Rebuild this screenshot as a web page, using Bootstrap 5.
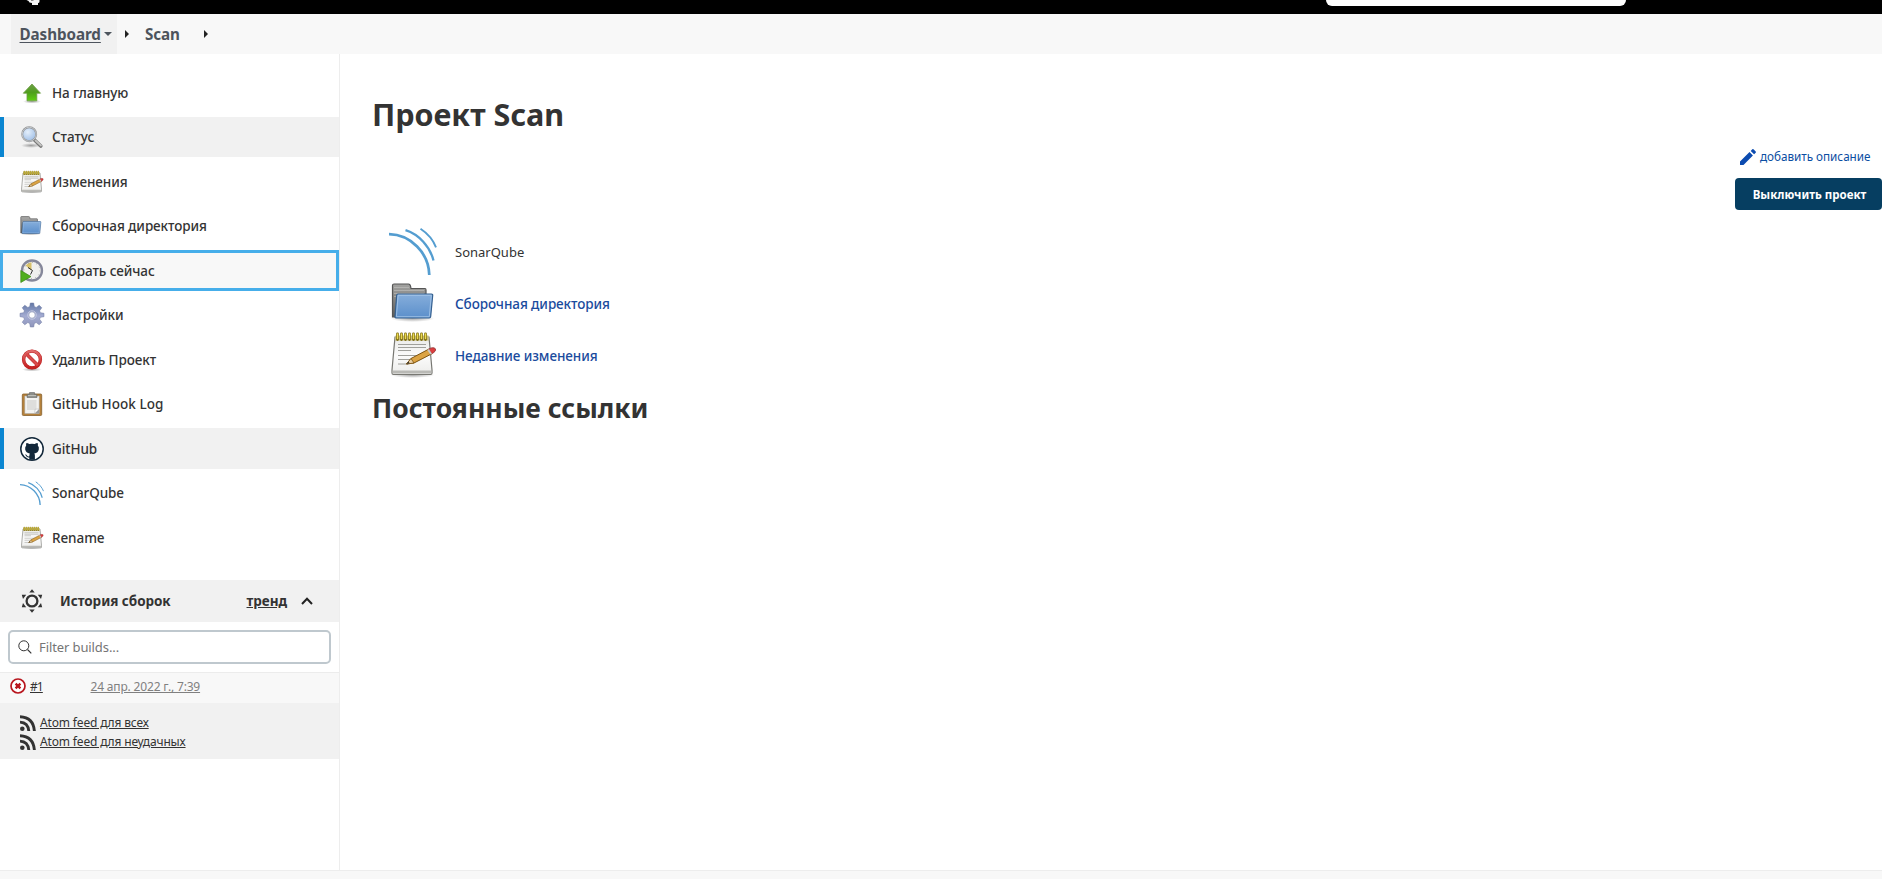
<!DOCTYPE html>
<html lang="ru">
<head>
<meta charset="utf-8">
<meta name="viewport" content="width=device-width, initial-scale=1">
<title>Scan [Jenkins]</title>
<link rel="stylesheet" href="https://cdn.jsdelivr.net/npm/bootstrap@5.3.0/dist/css/bootstrap.min.css">
<style>
  body { font-family: "Noto Sans", "Open Sans", sans-serif; color: #333; font-size: 13.5px; height: 100vh; overflow: hidden; background: #fff; }
  svg { display: block; flex: none; overflow: visible; }
  a { color: inherit; }
  .topbar { height: 14px; background: #000; padding-right: 256px; padding-left: 26px; }
  .top-search { width: 300px; height: 6px; background: #fff; border-radius: 0 0 6px 6px; }
  .crumbs { height: 40px; background: #f8f8f8; font-size: 15.2px; font-weight: 700; letter-spacing: -.07px; color: #4d545d; }
  .crumb-home { margin-left: 11px; width: 106px; padding-left: 8.5px; background: #f1f1f1; }
  .crumb-home a { text-underline-offset: 2px; }
  .caret-down { border: 4.5px solid transparent; border-top-color: #4d545d; border-bottom: 0; margin-left: 3px; }
  .caret-right { border: 4.5px solid transparent; border-left-color: #222; border-right: 0; }
  .crumb-sep { margin-left: 8px; }
  .crumb-project { margin: 0 24.5px 0 16px; }
  .side { width: 340px; border-right: 1px solid #ededed; padding-top: 18.2px; }
  .tasks { gap: 4px; }
  .tasks .nav-link { height: 40.5px; padding: .8px 0 0 20px; gap: 8px; color: #333; font-weight: 500; letter-spacing: -.08px; }
  .tasks .nav-link.active { background: #f1f1f1; box-shadow: inset 4px 0 #0b86d1; }
  .tasks .nav-link.focused { background: #f8f8f8; border: 3px solid #46aeea; border-radius: 0; padding-left: 17px; }
  .tasks .nav-link.wide { letter-spacing: .06px; }
  .history-head { height: 42px; margin-top: 22.3px; background: #f1f1f1; font-weight: 700; padding: 0 26px 0 20px; letter-spacing: -.05px; }
  .history-title { margin-left: 16px; }
  .chevron { margin-left: 14px; }
  .filter-box { padding: 8px 8px 8px; }
  .filter-box .form-control { height: 34px; border: 2px solid #bfc8ce; border-radius: 5px; padding: 0 8px 0 29px; font-size: 13px; letter-spacing: -.1px; color: #333; }
  .filter-box .form-control::placeholder { color: #757575; }
  .filter-box svg { position: absolute; left: 10px; top: 10px; }
  .build-row { height: 31px; border-top: 1px solid #ececec; background: #f8f8f8; font-size: 12px; padding: 0 0 1px 10px; letter-spacing: -.17px; }
  .build-row svg { margin: 0 4px 3px 0; }
  .build-num { width: 60.5px; letter-spacing: -.9px; }
  .build-date { color: #808080; }
  .feeds { height: 56px; background: #f1f1f1; padding: 10.6px 0 0 20px; font-size: 12px; letter-spacing: -.16px; }
  .feeds a { height: 19px; gap: 4px; }
  .content-area { padding-top: 40px; }
  h1 { font-size: 30.5px; line-height: 40px; font-weight: 700; margin: 0 0 0 32px; }
  h2 { font-size: 26.5px; line-height: 36px; font-weight: 700; margin: 8px 0 0 32px; }
  .actions { gap: 9px; margin-top: 11px; }
  .describe { height: 24px; color: #0b4ea2; font-size: 11.7px; gap: 4px; padding-right: 11.500px; }
  .btn-dark-blue { width: 147px; height: 32px; background: #063e61; color: #fff; font-size: 11.5px; font-weight: 700; border: 0; border-radius: 4px; padding: 1px 0 0 2px; }
  .links { margin: 16px 0 0 49px; }
  .links > div { height: 52px; gap: 18px; }
  .links svg { margin-bottom: 3px; }
  .links a { color: #1a4b9d; font-weight: 500; letter-spacing: -.08px; }
  .links span { font-size: 13px; padding-top: 1px; }
  .foot { height: 9px; background: #f8f8f8; border-top: 1px solid #ededed; }
</style>
</head>
<body class="d-flex flex-column">

<svg width="0" height="0" class="position-absolute" aria-hidden="true">
  <defs>
    <linearGradient id="gGreen" x1="0" y1="0" x2="0" y2="1"><stop offset="0" stop-color="#6f9f4a"/><stop offset=".5" stop-color="#4f9f1c"/><stop offset="1" stop-color="#5fd010"/></linearGradient>
    <linearGradient id="gBlue" x1="0" y1="0" x2="0" y2="1"><stop offset="0" stop-color="#86aedb"/><stop offset="1" stop-color="#5b8fcb"/></linearGradient>
    <linearGradient id="gGrey" x1="0" y1="0" x2="0" y2="1"><stop offset="0" stop-color="#a3a3a1"/><stop offset="1" stop-color="#5e5e5c"/></linearGradient>
    <linearGradient id="gPaper" x1="0" y1="0" x2="0" y2="1"><stop offset="0" stop-color="#e9e9e7"/><stop offset=".5" stop-color="#fbfbfb"/><stop offset="1" stop-color="#ececea"/></linearGradient>
    <linearGradient id="gGear" x1="0" y1="0" x2="0" y2="1"><stop offset="0" stop-color="#6378a6"/><stop offset=".55" stop-color="#a4acd2"/><stop offset="1" stop-color="#8f96bb"/></linearGradient>
    <linearGradient id="gRed" x1="0" y1="0" x2="0" y2="1"><stop offset="0" stop-color="#e06a6a"/><stop offset="1" stop-color="#c51f1f"/></linearGradient>
    <radialGradient id="gLens" cx=".4" cy=".35" r=".7"><stop offset="0" stop-color="#e4effb"/><stop offset="1" stop-color="#9dbde6"/></radialGradient>
    <radialGradient id="gShade"><stop offset="0" stop-color="#000" stop-opacity=".35"/><stop offset="1" stop-color="#000" stop-opacity="0"/></radialGradient>

    <symbol id="i-notepad" viewBox="0 0 48 48">
      <ellipse cx="23.500" cy="44" rx="22" ry="3" fill="url(#gShade)"/>
      <path d="M6 6h34l3 33v3q0 1.500-1.500 1.500h-37Q3 43.500 3 42v-3z" fill="url(#gPaper)" stroke="#777772" stroke-width="1.200"/>
      <path d="M3.700 39.500h38.600l.2 3h-39z" fill="#b9b9b5"/>
      <path d="M6.500 4.500h33l.5 5H6z" fill="#c9bd7c"/>
      <path d="M8.500 3v5.500M12.500 3v5.500M16.500 3v5.500M20.500 3v5.500M24.500 3v5.500M28.500 3v5.500M32.500 3v5.500M36.500 3v5.500" stroke="#7a6a10" stroke-width="2.800" stroke-linecap="round"/>
      <path d="M8.500 3v4.500M12.500 3v4.500M16.500 3v4.500M20.500 3v4.500M24.500 3v4.500M28.500 3v4.500M32.500 3v4.500M36.500 3v4.500" stroke="#ecd94e" stroke-width="1.500" stroke-linecap="round"/>
      <path d="M9 13.500h28M9 16.500h28M9 19.500h13M9 24.500h21M9 28.500h14M9 33h10" stroke="#a0a09c" stroke-width="1"/>
      <path d="M17.500 33l4.500-5.500 18-9.500 3 4.700-18 9.300z" fill="#dba343" stroke="#7d5410" stroke-width="1"/>
      <path d="M17.500 33l4.500-5.500 3 4.500z" fill="#e9cfa3" stroke="#7d5410" stroke-width=".8"/>
      <path d="M17.500 33l2-2.500 1.200 1.700z" fill="#333"/>
      <path d="M39.500 18.200q4.600-2.800 6.800-.5 1.300 2.700-3.800 5.100z" fill="#dc3f3f" stroke="#8b2a2a" stroke-width=".8"/>
      <path d="M38.300 18.900l1.700-.9 3 4.700-1.700.9z" fill="#c9c9c9"/>
    </symbol>

    <symbol id="i-folder" viewBox="0 0 48 48">
      <ellipse cx="23.500" cy="39.500" rx="22" ry="3.500" fill="url(#gShade)"/>
      <path d="M3.500 38V6.500Q3.500 5 5 5h14.500Q21 5 21.500 7l.5 2.500h14q1 0 1 1.500v27z" fill="url(#gGrey)" stroke="#555" stroke-width="1.200"/>
      <path d="M5 8.500h15M5 11.500h30M5 14.500h30M5 17.500h30" stroke="#c9c9c7" stroke-opacity=".5" stroke-width="1"/>
      <path d="M9 15h33.500q1.300 0 1.200 1.300l-2 21.200q-.2 1.500-1.500 1.500H7Q5.800 39 6 37.200L7.700 16.300Q7.800 15 9 15z" fill="url(#gBlue)" stroke="#35608f" stroke-width="1.200"/>
      <path d="M9.100 16.300h33.200l-2 21.400H7.400z" fill="none" stroke="#a9c8ea" stroke-opacity=".8"/>
    </symbol>

    <symbol id="i-sonar" viewBox="0 0 48 48">
      <g fill="none" stroke="#549dd0"><path d="M0 7.200C21.500 7.500 40 26 40.300 48.500" stroke-width="2.700"/><path d="M16.500 3.200C30 7.500 41 19.500 44.500 33.500" stroke-width="2.300"/><path d="M31.500 1.700C38 6 44 12.500 47 20.300" stroke-width="1.900"/></g>
    </symbol>

    <symbol id="i-feed" viewBox="0 0 16 16">
      <circle cx="2.300" cy="13.700" r="2.300" fill="#333"/>
      <path d="M0 7.100q8.100.5 8.800 8.900M0 1.700q13.400.7 14.400 14.300" fill="none" stroke="#333" stroke-width="2.900"/>
    </symbol>
  </defs>
</svg>

<header class="topbar d-flex justify-content-between align-items-start">
  <svg width="14" height="6" viewBox="0 0 14 6"><path d="M.5 0h13v1.500q0 1.500-1.500 1.500v2H6V3L3.500 2.600 2.500 1z" fill="#f4f4f4"/><path d="M5 0h2.500" stroke="#222"/></svg>
  <div class="top-search"></div>
</header>

<nav class="crumbs d-flex align-items-center">
  <div class="crumb-home d-flex align-items-center h-100"><a href="#">Dashboard</a><span class="caret-down"></span></div>
  <span class="caret-right crumb-sep"></span>
  <span class="crumb-project">Scan</span>
  <span class="caret-right"></span>
</nav>

<div class="d-flex flex-grow-1">
  <aside class="side flex-shrink-0">
    <nav class="tasks nav flex-column flex-nowrap">
      <a class="nav-link d-flex align-items-center" href="#">
        <svg width="24" height="24" viewBox="0 0 24 24"><ellipse cx="12" cy="20.500" rx="9" ry="2" fill="url(#gShade)"/><path d="M12 3l8.500 9.200h-3.700v7.600H7v-7.600H3.300z" fill="url(#gGreen)" stroke="#6c9c42" stroke-width=".8"/></svg>На главную</a>
      <a class="nav-link active d-flex align-items-center" href="#">
        <svg width="24" height="24" viewBox="0 0 24 24"><ellipse cx="11" cy="20.500" rx="10" ry="2.400" fill="url(#gShade)"/><path d="M14.500 15l6.300 6" stroke="#777" stroke-width="3.600" stroke-linecap="round"/><path d="M15.500 15.500l5.500 5" stroke="#c4c4c2" stroke-width="1.800" stroke-linecap="round"/><circle cx="9.200" cy="9.200" r="7" fill="url(#gLens)" stroke="#8c8f92" stroke-width="1.900"/><circle cx="9.200" cy="9.200" r="7" fill="none" stroke="#dcdedf" stroke-width=".7"/></svg>Статус</a>
      <a class="nav-link d-flex align-items-center" href="#"><svg width="24" height="24"><use href="#i-notepad"/></svg>Изменения</a>
      <a class="nav-link d-flex align-items-center" href="#"><svg width="24" height="24"><use href="#i-folder" x="-1"/></svg>Сборочная директория</a>
      <a class="nav-link focused d-flex align-items-center" href="#">
        <svg width="24" height="24" viewBox="0 0 24 24"><circle cx="12" cy="11.500" r="10" fill="#f0f0ee" stroke="#85879a" stroke-width="2.300"/><path d="M11.500 11.500L5.500 6.500Q8 3.600 11.500 3.300z" fill="#d9c26a"/><circle cx="12" cy="11.500" r="8" fill="none" stroke="#999" stroke-width="1" stroke-dasharray=".8 3.390"/><path d="M8 8.500l4.500 3-2 4" fill="none" stroke="#333" stroke-width="1"/><path d="M.8 11.500L11 17.600.8 23.500z" fill="#4fae1e" stroke="#3c8a16" stroke-width=".7"/></svg>Собрать сейчас</a>
      <a class="nav-link d-flex align-items-center" href="#">
        <svg width="24" height="24" viewBox="0 0 24 24"><g fill="url(#gGear)"><path fill-rule="evenodd" d="M10.300 0h3.400l.6 3.600 1.900.8 3-2.200 2.600 2.600-2.200 3 .8 1.900 3.600.6v3.400l-3.600.6-.8 1.900 2.200 3-2.600 2.600-3-2.200-1.900.8-.6 3.600h-3.400l-.6-3.600-1.900-.8-3 2.200-2.600-2.600 2.200-3-.8-1.900L0 13.700v-3.400l3.600-.6.8-1.900-2.200-3 2.600-2.600 3 2.200 1.900-.8zM12 8.800a3.200 3.200 0 1 0 0 6.400 3.200 3.200 0 0 0 0-6.400z" stroke="#6f7aa3" stroke-width=".5"/></g><circle cx="12" cy="12" r="4.200" fill="none" stroke="#c7cbe2" stroke-width="1"/></svg>Настройки</a>
      <a class="nav-link d-flex align-items-center" href="#">
        <svg width="24" height="24" viewBox="0 0 24 24"><ellipse cx="12" cy="21.500" rx="10" ry="2" fill="url(#gShade)"/><circle cx="12" cy="11.500" r="8.400" fill="#fff" stroke="#bd2222" stroke-width="3.400"/><path d="M6.200 5.700l11.600 11.600" stroke="#bd2222" stroke-width="3.400"/><circle cx="12" cy="11.500" r="8.400" fill="none" stroke="url(#gRed)" stroke-width="2.500"/><path d="M6.200 5.700l11.600 11.600" stroke="#d94a4a" stroke-width="2.400"/></svg>Удалить Проект</a>
      <a class="nav-link wide d-flex align-items-center" href="#">
        <svg width="24" height="24" viewBox="0 0 24 24"><rect x="2.300" y="2" width="19.400" height="21.500" rx="1" fill="#b5813a" stroke="#86602c" stroke-width=".8"/><path d="M4.800 4h14.400v17.500H4.800z" fill="#f3f3f1" stroke="#aaa" stroke-width=".5"/><path d="M7 8h9.500v10H7z" fill="#dededc"/><path d="M19.200 17v4.500h-4.500z" fill="#999"/><path d="M14.700 21.500l.5-4.300 4-.2z" fill="#fff" stroke="#aaa" stroke-width=".5"/><path d="M7 5.500V3.300Q7 2.300 8 2.300h1.500V.5h5v1.800H16q1 0 1 1v2.200z" fill="#8b8d88" stroke="#666" stroke-width=".6"/><path d="M8 3.600h8" stroke="#d0d0cd" stroke-width=".8"/></svg>GitHub Hook Log</a>
      <a class="nav-link active d-flex align-items-center" href="#">
        <svg width="24" height="24" viewBox="0 0 24 24"><circle cx="12" cy="12" r="11.200" fill="#fff" stroke="#13283a" stroke-width="1.500"/><path d="M6.400 6q1.600.1 2.900 1 2.700-.6 5.400 0 1.300-.9 2.900-1 .6 1.600.2 2.600 1.500 1.700 1 4-.6 3.300-4.500 3.900.6.700.6 1.900v4.300H9.300v-2.200q-2.500.3-3.200-1.400-.4-1-1.200-1.500 1.400-.4 2.300 1.200.6.900 2.100.5 0-1.200.5-2.800-3.900-.5-4.600-3.900-.4-2.300 1-4-.4-1 .2-2.600z" fill="#13283a"/></svg>GitHub</a>
      <a class="nav-link d-flex align-items-center" href="#"><svg width="24" height="24"><use href="#i-sonar"/></svg>SonarQube</a>
      <a class="nav-link d-flex align-items-center" href="#"><svg width="24" height="24"><use href="#i-notepad"/></svg>Rename</a>
    </nav>

    <div class="history-head d-flex align-items-center">
      <svg width="24" height="24" viewBox="0 0 24 24"><circle cx="12" cy="12" r="5.400" fill="none" stroke="#333" stroke-width="2.300"/><g fill="#333"><path d="M12 .3l2.700 3.300H9.300zM12 23.700l2.700-3.300H9.300z"/><path d="M1.800 5.800h4.400L3 10zM22.200 5.800h-4.400L21 10zM1.800 18.200h4.400L3 14zM22.200 18.200h-4.400L21 14z"/></g></svg>
      <span class="history-title">История сборок</span>
      <a class="ms-auto" href="#">тренд</a>
      <svg class="chevron" width="12" height="8" viewBox="0 0 12 8"><path d="M1 7l5-5.200L11 7" fill="none" stroke="#222" stroke-width="2"/></svg>
    </div>

    <div class="filter-box">
      <div class="position-relative">
        <input class="form-control" type="text" placeholder="Filter builds...">
        <svg width="14" height="14" viewBox="0 0 14 14"><circle cx="5.800" cy="5.800" r="5" fill="none" stroke="#333" stroke-width="1"/><path d="M9.500 9.500L13.300 13.300" stroke="#333" stroke-width="1.100"/></svg>
      </div>
    </div>

    <div class="build-row d-flex align-items-center">
      <svg width="16" height="16" viewBox="0 0 16 16"><circle cx="8" cy="8" r="7" fill="#fff" stroke="#b8161e" stroke-width="1.700"/><path d="M5.600 5.600l4.800 4.800M10.400 5.600l-4.800 4.800" stroke="#b8161e" stroke-width="2.400"/></svg>
      <span class="build-num"><a href="#">#1</a></span>
      <a class="build-date" href="#">24 апр. 2022 г., 7:39</a>
    </div>

    <div class="feeds">
      <a class="d-flex align-items-center" href="#"><svg width="16" height="16"><use href="#i-feed"/></svg>Atom feed для всех</a>
      <a class="d-flex align-items-center" href="#"><svg width="16" height="16"><use href="#i-feed"/></svg>Atom feed для неудачных</a>
    </div>
  </aside>

  <main class="content-area flex-grow-1">
    <h1>Проект Scan</h1>
    <div class="actions d-flex flex-column align-items-end">
      <a class="describe d-flex align-items-center text-decoration-none" href="#">
        <svg width="16" height="16" viewBox="0 0 16 16"><path d="M0 12.500L9.500 3l3.400 3.400L3.500 16H0zM10.700 1.900L12.300.3q.6-.5 1.200 0l2.200 2.200q.5.600 0 1.200l-1.600 1.500z" fill="#0b4bb0"/></svg>добавить описание</a>
      <button class="btn btn-dark-blue" type="button">Выключить проект</button>
    </div>
    <div class="links">
      <div class="d-flex align-items-center"><svg width="48" height="48"><use href="#i-sonar"/></svg><span>SonarQube</span></div>
      <div class="d-flex align-items-center"><svg width="48" height="48"><use href="#i-folder"/></svg><a class="text-decoration-none" href="#">Сборочная директория</a></div>
      <div class="d-flex align-items-center"><svg width="48" height="48"><use href="#i-notepad"/></svg><a class="text-decoration-none" href="#">Недавние изменения</a></div>
    </div>
    <h2>Постоянные ссылки</h2>
  </main>
</div>

<footer class="foot flex-shrink-0"></footer>
<script src="https://cdn.jsdelivr.net/npm/bootstrap@5.3.0/dist/js/bootstrap.bundle.min.js"></script>
</body>
</html>
